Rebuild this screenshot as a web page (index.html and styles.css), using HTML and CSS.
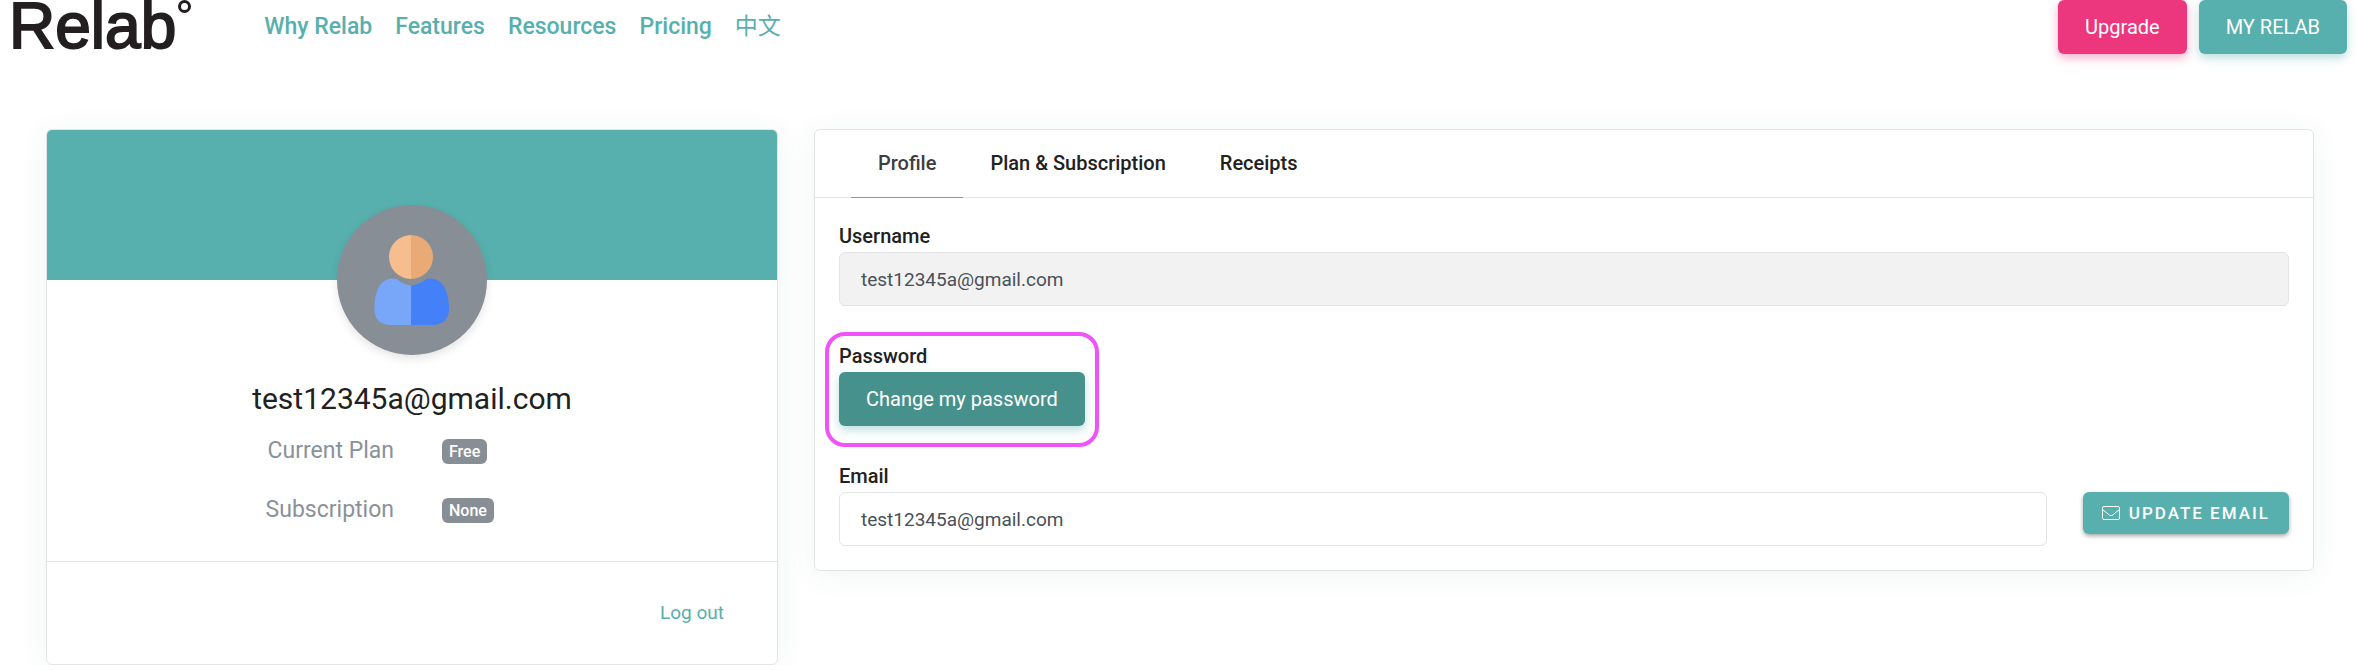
FILE: index.html
```html
<!DOCTYPE html>
<html lang="en">
<head>
    <meta charset="UTF-8">
    <meta name="viewport" content="width=device-width, initial-scale=1.0">
    <title>My Profile | Relab</title>
    <link rel="stylesheet" href="styles.css">
</head>
<body>

    <header class="header">
        <a class="logo" href="#">Relab<span class="logo-ring"></span></a>
        <nav class="nav">
            <a href="#">Why Relab</a>
            <a href="#">Features</a>
            <a href="#">Resources</a>
            <a href="#">Pricing</a>
            <a class="lang" href="#" lang="zh">中文</a>
        </nav>
        <div class="header-buttons">
            <button type="button" class="btn btn-pink">Upgrade</button>
            <button type="button" class="btn">MY RELAB</button>
        </div>
    </header>

    <main class="container">
        <section class="card user-card">
            <div class="banner"></div>
            <div class="avatar">
                <svg viewBox="0 0 150 150" role="img" aria-label="Avatar">
                    <path fill="#f6be8e" d="M74 30a22 22 0 0 0 0 44z"/>
                    <path fill="#e9aa76" d="M74 30a22 22 0 0 1 0 44z"/>
                    <path fill="#78a6f8" d="M74 80.500C68 80 63.500 77.500 60 74.300C58 73.500 55 73.500 53 73.700C43 75 38 86 37.500 101C36.500 113 42 120 54 120H74z"/>
                    <path fill="#4480f8" d="M74 80.500C80 80 85.500 77.500 89 74.300C91 73.500 94 73.500 96 73.700C106 75 111.500 86 112 101C113 113 107 120 95 120H74z"/>
                </svg>
            </div>
            <h1>test12345a@gmail.com</h1>
            <dl class="plan">
                <dt>Current Plan</dt>
                <dd><span class="badge">Free</span></dd>
                <dt>Subscription</dt>
                <dd><span class="badge">None</span></dd>
            </dl>
            <div class="card-footer">
                <a href="#">Log out</a>
            </div>
        </section>

        <section class="card settings-card">
            <nav class="tabs">
                <a class="active" href="#">Profile</a>
                <a href="#">Plan &amp; Subscription</a>
                <a href="#">Receipts</a>
            </nav>
            <form class="card-body">
                <div class="form-group">
                    <label for="username">Username</label>
                    <input type="text" id="username" value="test12345a@gmail.com" readonly>
                </div>
                <div class="form-group highlight">
                    <label for="changePassword">Password</label>
                    <button type="button" class="btn btn-dark" id="changePassword">Change my password</button>
                </div>
                <div class="form-group">
                    <label for="email">Email</label>
                    <div class="email-row">
                        <input type="email" id="email" value="test12345a@gmail.com">
                        <button type="button" class="btn-update">
                            <svg viewBox="0 0 18 14" aria-hidden="true">
                                <rect x="0.5" y="0.5" width="17" height="13" rx="1.500"/>
                                <path d="M0.500 3.500C3 5.500 5 7 6.800 8.600C8.300 10 9.700 10 11.200 8.600C13 7 15 5.500 17.500 3.500"/>
                            </svg>
                            UPDATE EMAIL
                        </button>
                    </div>
                </div>
            </form>
        </section>
    </main>

</body>
</html>
```
FILE: styles.css
```css
* {
    box-sizing: border-box;
}
body {
    font-family: Roboto, "Noto Sans CJK SC", sans-serif;
    font-size: 20px;
    line-height: 28px;
    color: #212121;
    background: white;
    margin: 0;
}
a {
    color: #57b0ad;
    text-decoration: none;
}
.header {
    display: flex;
    align-items: flex-start;
    height: 54px;
    padding: 0 13px 0 9px;
}
.logo {
    position: relative;
    font-family: "Liberation Sans", Arial, sans-serif;
    font-size: 64px;
    line-height: 52px;
    color: #231f20;
    -webkit-text-stroke: 2px #231f20;
}
.logo-ring {
    position: absolute;
    top: 0;
    right: -15px;
    width: 13px;
    height: 13px;
    border: 3px solid #231f20;
    border-radius: 50%;
}
.nav {
    display: flex;
    gap: 23px;
    margin-left: 88px;
    font-size: 23px;
    font-weight: 500;
    line-height: 54px;
}
.nav .lang {
    font-weight: 400;
}
.header-buttons {
    display: flex;
    gap: 12px;
    margin-left: auto;
}
.btn {
    height: 54px;
    padding: 0 27px;
    border: none;
    border-radius: 6px;
    font-family: inherit;
    font-size: 20px;
    color: white;
    background: #57b0ad;
    box-shadow: 0 4px 10px rgba(87, 176, 173, 0.4);
    cursor: pointer;
}
.btn-pink {
    background: #ec367e;
    box-shadow: 0 4px 10px rgba(236, 54, 126, 0.4);
}
.btn-dark {
    background: #47918d;
}
.container {
    display: flex;
    align-items: flex-start;
    gap: 36px;
    padding: 75px 46px 0;
}
.card {
    background: white;
    border: 1px solid #e3e5e5;
    border-radius: 6px;
    box-shadow: 0 4px 30px rgba(40, 90, 85, 0.07);
}
.user-card {
    width: calc(100% / 3 - 24px);
}
.settings-card {
    flex: 1;
}
.banner {
    height: 150px;
    border-radius: 5px 5px 0 0;
    background: #57b0ad;
}
.avatar {
    width: 150px;
    height: 150px;
    margin: -75px auto 0;
    border-radius: 50%;
    background: #878e95;
    box-shadow: 0 4px 10px rgba(0, 0, 0, 0.1);
}
.avatar svg {
    display: block;
}
h1 {
    margin: 24px 0 0;
    font-size: 30px;
    font-weight: 400;
    line-height: 40px;
    text-align: center;
}
.plan {
    display: grid;
    grid-template-columns: 1fr 1fr;
    gap: 31px 48px;
    margin: 18px 0 37px;
    padding-left: 12px;
    font-size: 23px;
    color: #8a9199;
}
.plan dt {
    text-align: right;
}
.plan dd {
    display: flex;
    align-items: center;
    margin: 0;
}
.badge {
    padding: 0 7px;
    border-radius: 6px;
    font-size: 16px;
    font-weight: 500;
    line-height: 25px;
    color: white;
    background: #878e95;
}
.card-footer {
    padding: 37px 53px;
    border-top: 1px solid #e3e5e5;
    font-size: 19px;
    text-align: right;
}
.tabs {
    display: flex;
    padding: 0 36px;
    border-bottom: 1px solid #e3e5e5;
    font-weight: 500;
    line-height: 67px;
}
.tabs a {
    margin-bottom: -1px;
    padding: 0 27px;
    border-bottom: 1px solid transparent;
    color: #212121;
}
.tabs .active {
    color: #3c3e40;
    border-color: #57b0ad;
}
.card-body {
    padding: 24px;
}
.form-group {
    position: relative;
    margin-bottom: 36px;
}
.form-group:last-child {
    margin-bottom: 0;
}
label {
    display: block;
    margin-bottom: 2px;
    font-weight: 500;
    line-height: 28px;
}
input {
    display: block;
    width: 100%;
    height: 54px;
    padding: 0 21px;
    border: 1px solid #e1e3e4;
    border-radius: 6px;
    font-family: inherit;
    font-size: 19px;
    color: #495057;
    background: white;
}
input:read-only {
    background: #f2f2f2;
}
.highlight {
    width: fit-content;
}
.highlight .btn {
    display: block;
}
/* marker drawn round the password group */
.highlight::after {
    content: "";
    position: absolute;
    inset: -10px -14px -21px;
    border: 4px solid #f054f8;
    border-radius: 20px;
    pointer-events: none;
}
.email-row {
    display: flex;
    align-items: flex-start;
    gap: 36px;
}
.email-row input {
    flex: 1;
}
.btn-update {
    display: flex;
    align-items: center;
    gap: 9px;
    height: 42px;
    padding: 0 19px;
    border: none;
    border-radius: 6px;
    font-family: inherit;
    font-size: 17px;
    font-weight: 500;
    letter-spacing: 2px;
    color: white;
    background: #57b0ad;
    box-shadow: 0 2px 4px rgba(0, 0, 0, 0.35);
    cursor: pointer;
}
.btn-update svg {
    width: 18px;
    height: 14px;
    fill: none;
    stroke: white;
}
```
